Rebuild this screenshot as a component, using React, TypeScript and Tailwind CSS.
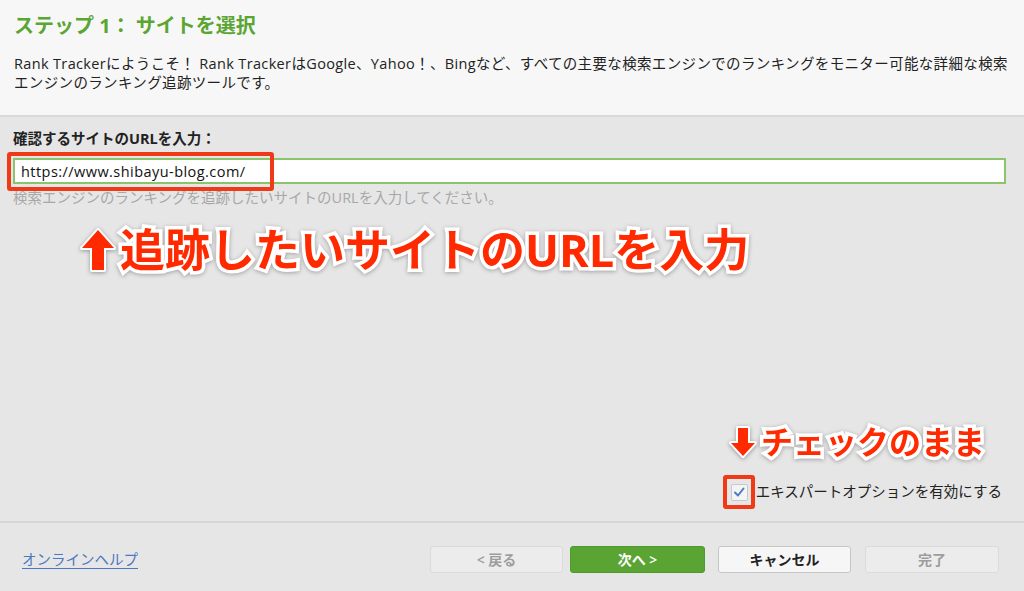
import { useState } from 'react';

const font = '[font-family:"Open_Sans","Noto_Sans_CJK_JP",sans-serif]';

function UpArrow() {
  return (
    <svg width="38" height="46" viewBox="0 0 38 46" className="shrink-0 drop-shadow-[0_1px_2px_rgba(0,0,0,0.35)]">
      <path
        d="M19 3 L35 21 L25 21 L25 43 L13 43 L13 21 L3 21 Z"
        fill="#ff2a00"
        stroke="#fff"
        strokeWidth="4"
        strokeLinejoin="round"
        paintOrder="stroke fill"
      />
    </svg>
  );
}

function DownArrow() {
  return (
    <svg width="30" height="34" viewBox="0 0 30 34" className="shrink-0 drop-shadow-[0_1px_2px_rgba(0,0,0,0.35)]">
      <path
        d="M10 3 L20 3 L20 18 L27 18 L15 31 L3 18 L10 18 Z"
        fill="#ff2a00"
        stroke="#fff"
        strokeWidth="4"
        strokeLinejoin="round"
        paintOrder="stroke fill"
      />
    </svg>
  );
}

export default function App() {
  const [url, setUrl] = useState('https://www.shibayu-blog.com/');
  const [expert, setExpert] = useState(true);

  const note =
    'font-bold text-[#ff2a00] [-webkit-text-stroke:7px_#fff] [paint-order:stroke_fill] drop-shadow-[0_1px_2px_rgba(0,0,0,0.3)]';

  return (
    <div className={`w-[1024px] h-[591px] flex flex-col bg-[#e6e6e6] text-[#222] text-[14.5px] ${font}`}>
      {/* header */}
      <div className="h-[117px] shrink-0 bg-[#f7f7f7] border-b-2 border-[#d9d9d9] px-[14px] pt-[12px]">
        <h1 className="text-[20px] leading-[28px] font-bold text-[#5ba532]">ステップ 1： サイトを選択</h1>
        <p className="mt-[14px] leading-[19px] tracking-[0.35px] text-[#222]">
          Rank Trackerにようこそ！ Rank TrackerはGoogle、Yahoo！、Bingなど、すべての主要な検索エンジンでのランキングをモニター可能な詳細な検索エンジンのランキング追跡ツールです。
        </p>
      </div>

      {/* main */}
      <div className="flex-1 flex flex-col px-[13px] pt-[12px] pb-[19px] border-b-2 border-[#d6d6d6]">
        <label className="leading-[20px] font-bold">確認するサイトのURLを入力：</label>
        <div className="relative mt-[9px] mr-[5px]">
          <input
            value={url}
            onChange={(e) => setUrl(e.target.value)}
            className="w-full h-[26px] bg-white border-2 border-[#8cc46c] px-[6px] text-[14.5px] tracking-[0.45px] text-[#111] outline-none"
          />
          <div className="absolute left-[-6px] top-[-6px] w-[267px] h-[39px] border-[4px] border-[#f03a17] rounded-[3px] pointer-events-none" />
        </div>
        <p className="mt-[4px] leading-[20px] text-[#a8a8a8]">
          検索エンジンのランキングを追跡したいサイトのURLを入力してください。
        </p>

        <div className="flex items-center gap-[3px] mt-[18px] ml-[66px]">
          <UpArrow />
          <span className={`text-[45px] leading-[48px] ${note}`}>追跡したいサイトのURLを入力</span>
        </div>

        <div className="mt-auto flex flex-col items-end">
          <div className="flex items-center gap-[3px] mr-[26px] mb-[22px]">
            <DownArrow />
            <span className={`text-[32px] leading-[36px] ${note}`}>チェックのまま</span>
          </div>
          <label className="flex items-center mr-[9px] cursor-pointer">
            <span className="relative w-[17px] h-[17px] flex items-center justify-center bg-[#f4f4f4] border border-[#c9c9c9] rounded-[2px]">
              <input
                type="checkbox"
                checked={expert}
                onChange={(e) => setExpert(e.target.checked)}
                className="absolute inset-0 opacity-0"
              />
              {expert && (
                <svg width="12" height="12" viewBox="0 0 12 12">
                  <path d="M2 6.5 L5 9.5 L10.5 2.5" fill="none" stroke="#4a7cc7" strokeWidth="2" strokeLinecap="round" strokeLinejoin="round" />
                </svg>
              )}
              <span className="absolute left-[-9px] top-[-10px] w-[32px] h-[34px] border-[4px] border-[#f03a17] rounded-[3px] pointer-events-none" />
            </span>
            <span className="ml-[8px] leading-[20px]">エキスパートオプションを有効にする</span>
          </label>
        </div>
      </div>

      {/* footer */}
      <div className="h-[68px] shrink-0 flex items-center px-[22px] pt-[4px]">
        <a href="#" className="text-[#4a78c2] underline underline-offset-[3px] mt-[2px]">オンラインヘルプ</a>
        <div className="ml-auto flex items-center mr-[3px]">
          <button disabled className="w-[133px] h-[27px] rounded-[3px] bg-[#ececec] border border-[#dadada] text-[#9d9d9d] text-[14px] font-semibold">
            &lt; 戻る
          </button>
          <button className="ml-[7px] w-[135px] h-[27px] rounded-[3px] bg-[#5aa434] border border-[#4e9a2c] text-white text-[14px] font-semibold">
            次へ &gt;
          </button>
          <button className="ml-[13px] w-[133px] h-[27px] rounded-[3px] bg-[#f6f6f6] border border-[#c6c6c6] text-[#222] text-[14px] font-bold">
            キャンセル
          </button>
          <button disabled className="ml-[14px] w-[134px] h-[27px] rounded-[3px] bg-[#ececec] border border-[#dadada] text-[#9d9d9d] text-[14px] font-semibold">
            完了
          </button>
        </div>
      </div>
    </div>
  );
}
